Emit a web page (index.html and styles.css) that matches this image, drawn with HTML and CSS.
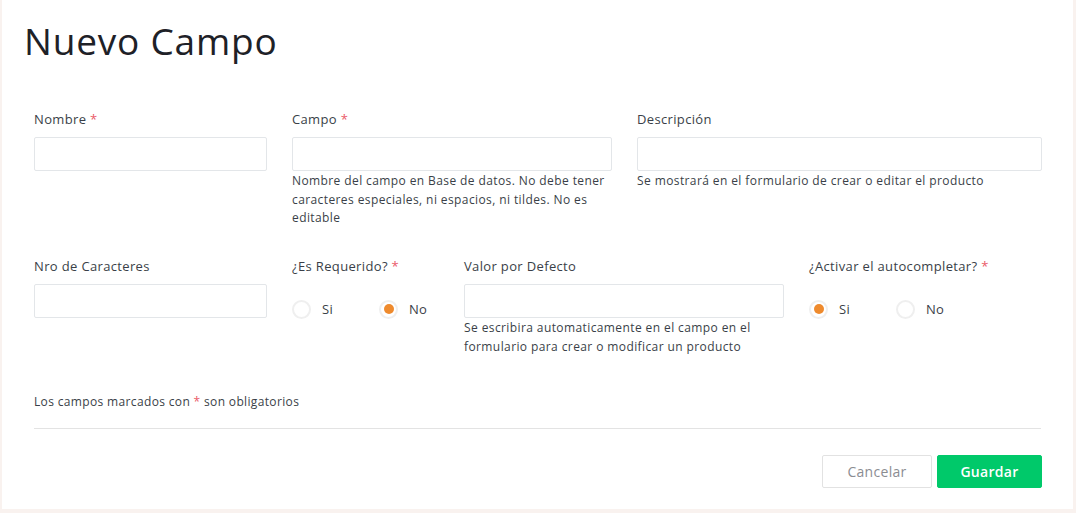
FILE: index.html
```html
<!DOCTYPE html>
<html lang="es">
<head>
<meta charset="utf-8">
<title>Nuevo Campo</title>
<link rel="stylesheet" href="styles.css">
</head>
<body>
<div class="card">
  <h1 class="title">Nuevo Campo</h1>
  <form class="form">
    <div class="row row-1">
      <div class="field">
        <label class="label">Nombre <span class="req">*</span></label>
        <input class="input" type="text">
      </div>
      <div class="field">
        <label class="label">Campo <span class="req">*</span></label>
        <input class="input" type="text">
        <p class="help">Nombre del campo en Base de datos. No debe tener caracteres especiales, ni espacios, ni tildes. No es editable</p>
      </div>
      <div class="field">
        <label class="label">Descripción</label>
        <input class="input" type="text">
        <p class="help">Se mostrará en el formulario de crear o editar el producto</p>
      </div>
    </div>
    <div class="row row-2">
      <div class="field">
        <label class="label">Nro de Caracteres</label>
        <input class="input" type="text">
      </div>
      <div class="field">
        <label class="label">¿Es Requerido? <span class="req">*</span></label>
        <div class="radios">
          <span class="radio"><span class="circle"></span>Si</span>
          <span class="radio"><span class="circle on"></span>No</span>
        </div>
      </div>
      <div class="field">
        <label class="label">Valor por Defecto</label>
        <input class="input" type="text">
        <p class="help">Se escribira automaticamente en el campo en el formulario para crear o modificar un producto</p>
      </div>
      <div class="field">
        <label class="label">¿Activar el autocompletar? <span class="req">*</span></label>
        <div class="radios">
          <span class="radio"><span class="circle on"></span>Si</span>
          <span class="radio"><span class="circle"></span>No</span>
        </div>
      </div>
    </div>
    <p class="note">Los campos marcados con <span class="req">*</span> son obligatorios</p>
    <div class="actions">
      <button type="button" class="btn btn-cancel">Cancelar</button>
      <button type="button" class="btn btn-save">Guardar</button>
    </div>
  </form>
</div>
</body>
</html>
```

FILE: styles.css
```css
html, body {
  margin: 0;
  padding: 0;
}
body {
  background: #f9f2ef;
  font-family: "Open Sans", "Noto Sans", sans-serif;
  color: #3a3f48;
  width: 1076px;
  height: 513px;
  overflow: hidden;
}
.card {
  margin-left: 2px;
  width: 1071px;
  height: 509px;
  background: #ffffff;
  box-sizing: border-box;
  padding: 18px 0 0 0;
}
.title {
  margin: 0 0 0 22px;
  font-size: 37px;
  font-weight: 400;
  line-height: 46px;
  color: #1e2127;
  letter-spacing: 0.8px;
}
.form {
  padding: 0 32px;
  margin-top: 46px;
}
.row {
  display: grid;
  column-gap: 25px;
}
.row-1 {
  grid-template-columns: 233px 320px 405px;
  height: 147px;
}
.row-2 {
  grid-template-columns: 233px 147px 320px 233px;
  height: 136px;
}
.field {
  display: flex;
  flex-direction: column;
  min-width: 0;
}
.label {
  font-size: 13px;
  line-height: 18px;
  height: 18px;
  margin-bottom: 9px;
  color: #3a3f48;
  letter-spacing: 0.35px;
  white-space: nowrap;
}
.req {
  color: #ea5a68;
}
.input {
  box-sizing: border-box;
  height: 34px;
  width: 100%;
  border: 1px solid #e3e6e9;
  border-radius: 2px;
  background: #fff;
  margin: 0;
  padding: 0 10px;
  outline: none;
}
.help {
  margin: 1px 0 0 0;
  font-size: 12px;
  line-height: 18.5px;
  color: #3a3f48;
  letter-spacing: 0.4px;
}
.radios {
  display: flex;
  height: 34px;
  align-items: center;
  padding-top: 8px;
}
.radio {
  display: flex;
  align-items: center;
  flex: none;
  width: 87px;
  font-size: 13px;
  color: #3a3f48;
  letter-spacing: 0.3px;
}
.circle {
  box-sizing: border-box;
  flex: none;
  width: 19px;
  height: 19px;
  border-radius: 50%;
  border: 2px solid #efefef;
  margin-right: 11px;
  display: flex;
  align-items: center;
  justify-content: center;
}
.circle.on::after {
  content: "";
  width: 10px;
  height: 10px;
  border-radius: 50%;
  background: #ee8a2d;
}
.note {
  margin: 0;
  font-size: 12px;
  line-height: 18px;
  color: #3a3f48;
  letter-spacing: 0.35px;
  padding-bottom: 17px;
  border-bottom: 1px solid #e3e3e3;
}
.actions {
  display: flex;
  justify-content: flex-end;
  gap: 5px;
  margin-top: 26px;
  margin-right: -1px;
}
.btn {
  height: 33px;
  border-radius: 2px;
  font-family: "Open Sans", "Noto Sans", sans-serif;
  font-size: 14px;
  cursor: pointer;
  padding: 0;
  letter-spacing: 0.3px;
}
.btn-cancel {
  width: 110px;
  background: #fff;
  border: 1px solid #e2e2e2;
  color: #8b8d92;
}
.btn-save {
  width: 105px;
  background: #00c96a;
  border: 1px solid #00c96a;
  color: #fff;
  font-weight: 600;
}
```
